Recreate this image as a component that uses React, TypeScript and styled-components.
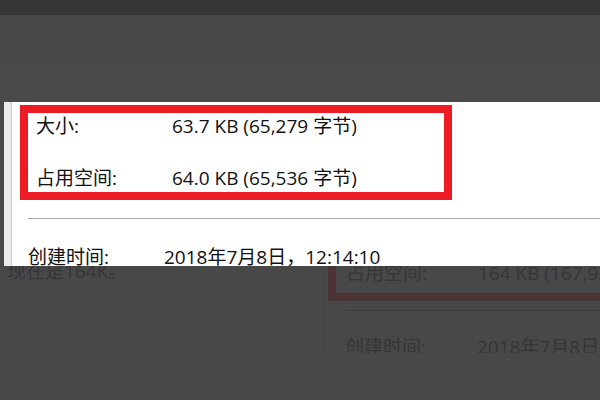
import styled, { createGlobalStyle } from 'styled-components';

const Global = createGlobalStyle`
  html, body {
    margin: 0;
    padding: 0;
    background: #484848;
  }
  body {
    font-family: "Open Sans", "Noto Sans CJK SC", sans-serif;
  }
`;

const Page = styled.div`
  width: 600px;
  height: 400px;
  overflow: hidden;
  background: #484848;
  display: flex;
  flex-direction: column;
`;

const TopBar = styled.div`
  height: 15px;
  background: #363636;
  flex: none;
`;

const Band = styled.div<{ $h: number; $bg: string }>`
  height: ${(p) => p.$h}px;
  background: ${(p) => p.$bg};
  flex: none;
`;

const Popup = styled.div`
  flex: none;
  height: 164px;
  margin-left: 4px;
  background: #fff;
  display: flex;
  overflow: hidden;
`;

const Edge = styled.div`
  width: 7px;
  flex: none;
  background: #ececec;
  border-right: 1px solid #c9c9c9;
`;

const Sheet = styled.div`
  flex: 1;
  padding: 3px 0 0 8px;
  color: #111;
  font-size: 19px;
`;

const Marked = styled.div<{ $dim?: boolean }>`
  width: ${(p) => (p.$dim ? 'auto' : '408px')};
  border: 8px solid ${(p) => (p.$dim ? '#4c3434' : '#ed1b24')};
  border-right-width: ${(p) => (p.$dim ? 0 : 8)}px;
  padding: ${(p) => (p.$dim ? '8px 0 9px 10px' : '2px 0 0 8px')};
  margin-top: ${(p) => (p.$dim ? -20 : 0)}px;
`;

const Row = styled.div<{ $label: number; $h: number }>`
  display: grid;
  grid-template-columns: ${(p) => p.$label}px auto;
  height: ${(p) => p.$h}px;
  line-height: 22px;
  white-space: nowrap;
`;

const Rule = styled.div<{ $dim?: boolean; $top: number }>`
  height: 1px;
  margin-top: ${(p) => p.$top}px;
  margin-left: ${(p) => (p.$dim ? 17 : 8)}px;
  background: ${(p) => (p.$dim ? '#3e3e3e' : '#a8a8a8')};
`;

const Plain = styled.div<{ $top: number }>`
  padding-left: 8px;
  margin-top: ${(p) => p.$top}px;
`;

const Below = styled.div`
  flex: none;
  height: 87px;
  display: flex;
  overflow: hidden;
`;

const Note = styled.div`
  width: 316px;
  flex: none;
  padding-left: 7px;
  margin-top: -6px;
  font-size: 19px;
  line-height: 22px;
  color: #363636;
`;

const Behind = styled.div`
  flex: 1;
  border-left: 1px solid #424242;
  padding-left: 4px;
  color: #363636;
  font-size: 19px;
  overflow: hidden;
`;

const DimRows = styled.div<{ $top: number }>`
  padding-left: 17px;
  margin-top: ${(p) => p.$top}px;
`;

export default function App() {
  return (
    <Page>
      <Global />
      <TopBar />
      <Band $h={50} $bg="#474747" />
      <Band $h={37} $bg="#4a4a4a" />
      <Popup>
        <Edge />
        <Sheet>
          <Marked>
            <Row $label={136} $h={52}>
              <span>大小:</span>
              <span>63.7 KB (65,279 字节)</span>
            </Row>
            <Row $label={136} $h={25}>
              <span>占用空间:</span>
              <span>64.0 KB (65,536 字节)</span>
            </Row>
          </Marked>
          <Rule $top={18} />
          <Plain $top={27}>
            <Row $label={136} $h={22}>
              <span>创建时间:</span>
              <span>2018年7月8日，12:14:10</span>
            </Row>
          </Plain>
        </Sheet>
      </Popup>
      <Below>
        <Note>现在是164K。</Note>
        <Behind>
          <Marked $dim>
            <Row $label={132} $h={22}>
              <span>占用空间:</span>
              <span>164 KB (167,936 字节)</span>
            </Row>
          </Marked>
          <Rule $dim $top={9} />
          <DimRows $top={25}>
            <Row $label={132} $h={22}>
              <span>创建时间:</span>
              <span>2018年7月8日，12:14:10</span>
            </Row>
          </DimRows>
        </Behind>
      </Below>
    </Page>
  );
}
